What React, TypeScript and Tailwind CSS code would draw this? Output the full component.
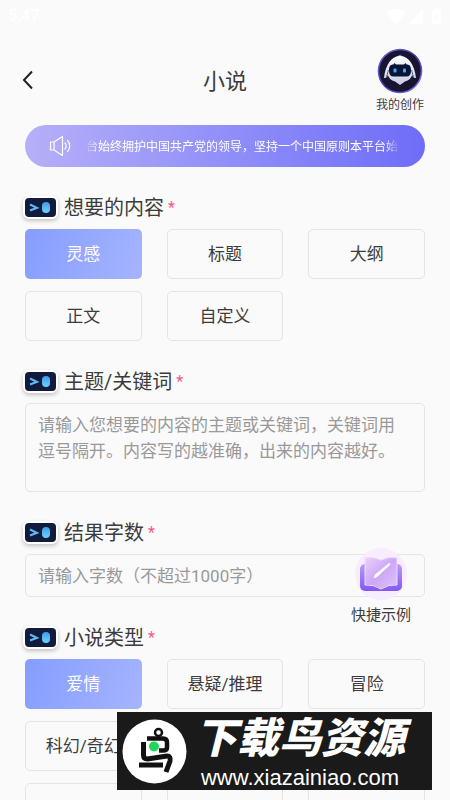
import { useState } from 'react';
import type { ReactNode } from 'react';

const CONTENT_OPTIONS = ['灵感', '标题', '大纲', '正文', '自定义'];
const GENRE_OPTIONS = ['爱情', '悬疑/推理', '冒险', '科幻/奇幻', '', '', '', '', ''];

function StatusBar() {
  return (
    <div className="flex h-8 shrink-0 items-center justify-between px-2 text-base font-medium text-white">
      <span>5:47</span>
      <svg width="56" height="18" viewBox="0 0 56 18" fill="currentColor" aria-hidden="true">
        <path d="M0 5.500Q10 -2 20 5.500L10 17Z" />
        <path d="M37 2V17H23Z" />
        <path d="M49 1h4v2h2v14h-9V3h3zM51 5l-3 6h2v4l3-6h-2z" fillRule="evenodd" />
      </svg>
    </div>
  );
}

function Avatar() {
  return (
    <svg width="46" height="46" viewBox="0 0 46 46" aria-hidden="true">
      <defs>
        <linearGradient id="ring" x1="0" y1="0" x2="1" y2="1">
          <stop offset="0" stopColor="#7c74e8" />
          <stop offset="0.5" stopColor="#4338a8" />
          <stop offset="1" stopColor="#8f7cf5" />
        </linearGradient>
        <linearGradient id="shell" x1="0" y1="0" x2="0" y2="1">
          <stop offset="0" stopColor="#ffffff" />
          <stop offset="1" stopColor="#c9cde2" />
        </linearGradient>
      </defs>
      <circle cx="23" cy="23" r="21.500" fill="#17152f" stroke="url(#ring)" strokeWidth="1.600" />
      <path d="M20.500 9q2.500-4.500 5 0z" fill="#4aa3ee" />
      <path d="M23 8c8 0 14.500 8 16 22-2 .5-3-1-4-3-1 4-4 5.500-7 6.500L23 37l-5-3.500c-3-1-6-2.500-7-6.500-1 2-2 3.500-4 3C8.500 16 15 8 23 8z" fill="url(#shell)" />
      <path d="M9.500 29l2-7M36.500 29l-2-7" stroke="#5d6088" strokeWidth="1" />
      <path d="M17.500 15l1.500 1.500h8l1.500-1.500 1 1.500c3.500 0 4.500 2 4.500 6s-1.500 6-4.500 6h-13c-3 0-4.500-2-4.500-6s1-6 4.500-6z" fill="#0b1436" />
      <rect x="16.500" y="20.500" width="3" height="4" rx="1" fill="#36aef5" />
      <rect x="26" y="20.500" width="3" height="4" rx="1" fill="#36aef5" />
    </svg>
  );
}

function Header() {
  return (
    <header className="grid shrink-0 grid-cols-[50px_1fr_50px] items-center px-[25px] pt-4">
      <button type="button" aria-label="返回" className="mb-1 flex h-12 items-center">
        <svg width="12" height="20" viewBox="0 0 12 20" className="-ml-1" fill="none" stroke="#222" strokeWidth="2">
          <path d="M11 1.500L3 10l8 8.500" />
        </svg>
      </button>
      <h1 className="text-center text-[22px] leading-8 text-[#3c3c3c]">小说</h1>
      <button type="button" className="flex flex-col items-center">
        <Avatar />
        <span className="text-xs leading-[22px] whitespace-nowrap text-[#3c3c3c]">我的创作</span>
      </button>
    </header>
  );
}

function Notice() {
  return (
    <div className="flex h-[42px] shrink-0 items-center gap-3 rounded-full bg-linear-to-r from-[#b6aff8] to-[#6f6cf8] pr-[25px] pl-6 text-white">
      <svg width="23" height="22" viewBox="0 0 23 22" className="shrink-0" fill="none" stroke="currentColor" strokeWidth="1.200" strokeLinejoin="round" strokeLinecap="round" aria-hidden="true">
        <path d="M1.500 7H5v8H1.500zM5 7l8.500-5.500v19L5 15" />
        <path d="M16 8c1.500 1.500 1.500 4.500 0 6M18.500 5.500c3 3 3 8 0 11" />
      </svg>
      <p className="flex flex-1 justify-center overflow-hidden mask-x-from-95% mask-x-to-100% pt-0.5 text-xs whitespace-nowrap">
        台始终拥护中国共产党的领导，坚持一个中国原则本平台始
      </p>
    </div>
  );
}

function FaceIcon() {
  return (
    <span className="-ml-0.5 flex h-[23px] w-[35px] items-center justify-center rounded-md border-2 border-white bg-[#111b3e] shadow-[0_2px_4px_rgba(0,0,0,0.22)]">
      <svg width="31" height="19" viewBox="0 0 31 19" fill="none" aria-hidden="true">
        <defs>
          <linearGradient id="eye" x1="0" y1="0" x2="0" y2="1">
            <stop offset="0" stopColor="#3f9bea" />
            <stop offset="1" stopColor="#6fd3fd" />
          </linearGradient>
        </defs>
        <path d="M5 6.500l7 3.300-7 2.700" stroke="#5fb9f3" strokeWidth="2" />
        <rect x="17" y="4" width="8" height="11" rx="4" fill="url(#eye)" />
      </svg>
    </span>
  );
}

function SectionTitle({ children }: { children: ReactNode }) {
  return (
    <span className="mb-[7px] flex h-[30px] items-center text-xl text-[#3c3c3c]">
      <FaceIcon />
      <span className="ml-1.5 pt-0.5">{children}</span>
      <span className="ml-1 pt-0.5 text-base text-[#f5588a]">*</span>
    </span>
  );
}

function OptionGrid({ title, options }: { title: string; options: string[] }) {
  const [selected, setSelected] = useState(0);
  return (
    <section>
      <h2>
        <SectionTitle>{title}</SectionTitle>
      </h2>
      <div className="grid grid-cols-3 gap-x-[25px] gap-y-3">
        {options.map((option, i) => (
          <button
            key={i}
            type="button"
            aria-pressed={i === selected}
            onClick={() => setSelected(i)}
            className={
              i === selected
                ? 'h-[50px] rounded-[5px] bg-linear-110 from-[#859dff] to-[#a5b4ff] pt-0.5 text-[17px] text-white'
                : 'h-[50px] rounded-[5px] border border-[#e4e4e4] pt-0.5 text-[17px] text-[#3c3c3c]'
            }
          >
            {option}
          </button>
        ))}
      </div>
    </section>
  );
}

function ExampleButton() {
  return (
    <button type="button" className="absolute top-[30px] right-[14px] flex flex-col items-center">
      <svg width="54" height="54" viewBox="0 0 54 54" aria-hidden="true">
        <defs>
          <linearGradient id="cover" x1="0" y1="0" x2="0" y2="1">
            <stop offset="0" stopColor="#b79af8" />
            <stop offset="1" stopColor="#8458f4" />
          </linearGradient>
          <linearGradient id="pages" x1="0" y1="0" x2="1" y2="1">
            <stop offset="0" stopColor="#ecd0fb" />
            <stop offset="0.5" stopColor="#cda7f6" />
            <stop offset="1" stopColor="#dcc4fc" />
          </linearGradient>
        </defs>
        <circle cx="27" cy="27" r="26" fill="#f7edff" />
        <rect x="6" y="17" width="42" height="27" rx="5" fill="url(#cover)" />
        <path d="M11 11q8-2 16 2 8-4 16-2v27q-8-1-16 4-8-5-16-4z" fill="url(#pages)" stroke="#efdcff" strokeWidth="1" strokeLinejoin="round" />
        <path d="M19.500 31.500l1.500-4L35 16q2 0 1 2L23 30z" fill="#fff" />
      </svg>
      <span className="pt-0.5 text-[15px] leading-6 text-[#3c3c3c]">快捷示例</span>
    </button>
  );
}

function Watermark() {
  return (
    <div className="fixed right-[18px] bottom-[10px] flex h-[78px] w-[315px] items-center gap-2 bg-[#1a1a1a] pl-[5px] text-white">
      <svg width="65" height="65" viewBox="0 0 65 65" className="shrink-0" fill="none" stroke="#111" aria-hidden="true">
        <circle cx="32.500" cy="32.500" r="32" fill="#fff" stroke="none" />
        <circle cx="36.500" cy="13.500" r="3.500" strokeWidth="2.500" />
        <path d="M25 19.500h16q4 0 4 4v5q0 3-4 3H37" strokeWidth="4.500" />
        <path d="M21.500 23v13q0 4 4 4L45 37q4 0 3 5l-4 11" strokeWidth="5" />
        <path d="M17 46h24" strokeWidth="5" />
        <circle cx="32" cy="27.500" r="5" fill="#20d75b" stroke="none" />
      </svg>
      <div className="flex flex-col items-center">
        <span className="text-[42px] leading-[52px] font-black whitespace-nowrap italic">下载鸟资源</span>
        <span className="font-['Liberation_Sans',sans-serif] text-[22px] leading-[25px]">www.xiazainiao.com</span>
      </div>
    </div>
  );
}

export default function App() {
  return (
    <div className="flex h-screen flex-col overflow-hidden bg-[#fafafa] font-['Roboto','Noto_Sans_CJK_SC',sans-serif]">
      <StatusBar />
      <Header />
      <main className="mt-[9px] flex min-h-0 flex-1 flex-col gap-[25px] px-[25px]">
        <Notice />
        <OptionGrid title="想要的内容" options={CONTENT_OPTIONS} />
        <section>
          <label htmlFor="topic">
            <SectionTitle>主题/关键词</SectionTitle>
          </label>
          <textarea
            id="topic"
            placeholder="请输入您想要的内容的主题或关键词，关键词用逗号隔开。内容写的越准确，出来的内容越好。"
            className="block h-[89px] w-full resize-none rounded-[5px] border border-[#e4e4e4] py-2 pr-4 pl-3 text-[17px] leading-[26px] text-[#3c3c3c] outline-none placeholder:text-[#999]"
          />
        </section>
        <section className="relative">
          <label htmlFor="words">
            <SectionTitle>结果字数</SectionTitle>
          </label>
          <input
            id="words"
            type="text"
            inputMode="numeric"
            placeholder="请输入字数（不超过1000字）"
            className="block h-[43px] w-full rounded-[5px] border border-[#e4e4e4] px-3 text-[17px] text-[#3c3c3c] outline-none placeholder:text-[#999]"
          />
          <ExampleButton />
        </section>
        <OptionGrid title="小说类型" options={GENRE_OPTIONS} />
      </main>
      <Watermark />
    </div>
  );
}
